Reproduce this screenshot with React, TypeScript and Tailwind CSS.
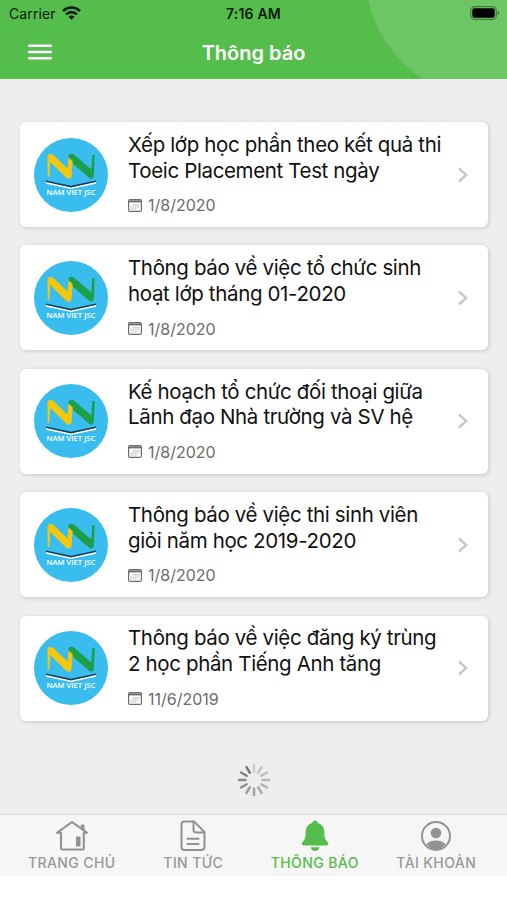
const notices = [
  { lines: ["Xếp lớp học phần theo kết quả thi", "Toeic Placement Test ngày"], date: "1/8/2020" },
  { lines: ["Thông báo về việc tổ chức sinh", "hoạt lớp tháng 01-2020"], date: "1/8/2020" },
  { lines: ["Kế hoạch tổ chức đối thoại giữa", "Lãnh đạo Nhà trường và SV hệ"], date: "1/8/2020" },
  { lines: ["Thông báo về việc thi sinh viên", "giỏi năm học 2019-2020"], date: "1/8/2020" },
  { lines: ["Thông báo về việc đăng ký trùng", "2 học phần Tiếng Anh tăng"], date: "11/6/2019" },
]

const spokes = ["#c9c9c9", "#c4c4c4", "#bebebe", "#b7b7b7", "#b0b0b0", "#a9a9a9", "#a1a1a1", "#999999", "#919191", "#898989", "#808080", "#777777"]

function StatusBar() {
  return (
    <div className="flex h-7 items-center justify-between pl-[9px] pr-[7px] text-[#0b1a08]">
      <div className="-mt-px flex w-[120px] items-center gap-[6px]">
        <span className="text-[14px] tracking-[0.1px]">Carrier</span>
        <svg className="-mt-px" width="19" height="14" viewBox="0 0 19 14" fill="none" stroke="#0b1a08" strokeWidth="2.6">
          <path d="M1 5.2C5.8.2 13.2.2 18 5.2" />
          <path d="M4.1 8.4C7.2 5.4 11.8 5.4 14.9 8.4" />
          <path d="M9.5 13.8L6.5 10.8C8.2 9.2 10.8 9.2 12.5 10.8Z" fill="#0b1a08" stroke="none" />
        </svg>
      </div>
      <span className="-ml-0.5 -mt-0.5 text-[14px] font-semibold tracking-[0.2px]">7:16 AM</span>
      <div className="flex w-[120px] justify-end">
        <svg className="-mt-0.5" width="30" height="14" viewBox="0 0 30 14" fill="none">
          <rect x="0.7" y="0.7" width="25.6" height="12.6" rx="3.8" stroke="#3f7d37" strokeWidth="1.2" />
          <rect x="2.3" y="2.3" width="22.4" height="9.4" rx="2" fill="#000" />
          <path d="M27.6 4.8C29.8 5.8 29.8 8.2 27.6 9.2Z" fill="#3f7d37" />
        </svg>
      </div>
    </div>
  )
}

function Logo() {
  return (
    <svg className="shrink-0" width="74" height="74" viewBox="0 0 74 74">
      <circle cx="37" cy="37" r="37" fill="#38bdee" />
      <path d="M34.5 17Q37.500 14.500 40.500 17L57.300 31.500L58.300 17H60.700L59.800 38.500Q59 41.500 55.500 40L34.500 22Z" fill="#1d9f49" />
      <path d="M13.500 18Q15 14.300 19.500 17L33.500 30.500L34.500 19.500L38.700 23L37.500 38.500Q36.500 42 32.500 40L16.300 24L15.300 39H13.700Z" fill="#f2c80f" />
      <path d="M12 43.600L37 49L62 43.600V45.700L37 51L12 45.700Z" fill="#fff" />
      <path d="M12 42.600L37 47.800L62 42.600V44L37 49.500L12 44Z" fill="#153f5b" />
      <text x="12.5" y="57.2" textLength="49" lengthAdjust="spacingAndGlyphs" fill="#fff" fontSize="7.9" fontWeight="600" fontFamily="Open Sans, sans-serif">
        NAM VIET JSC
      </text>
    </svg>
  )
}

function CalendarIcon() {
  return (
    <svg width="14" height="13" viewBox="0 0 14 13" fill="none">
      <rect x="0.6" y="0.6" width="12.8" height="11.8" rx="1.5" stroke="#6c6c6c" strokeWidth="1.2" />
      <path d="M1 2.4H13" stroke="#6c6c6c" strokeWidth="2" />
      <path d="M5 5.8H12M2.5 8H11.5M2.5 10H9.5" stroke="#b0b0b0" strokeWidth="1.2" strokeDasharray="1.5 .7" />
    </svg>
  )
}

function NoticeCard({ lines, date }: { lines: string[]; date: string }) {
  return (
    <article className="flex h-[105px] items-center rounded-[6px] bg-white pl-[13.5px] pr-[19px] shadow-[1px_1px_4px_rgba(0,0,0,0.16)]">
      <Logo />
      <div className="-mt-[2px] ml-[20.5px] flex-1 whitespace-nowrap">
        <h2 className="text-[20.5px] leading-[25.7px] tracking-[-0.36px] text-[#111]">
          {lines.map((line) => (
            <span key={line} className="block">{line}</span>
          ))}
        </h2>
        <div className="mt-3 flex h-5 items-center gap-[6px] text-[16px] text-[#6c6c6c]">
          <CalendarIcon />
          <span>{date}</span>
        </div>
      </div>
      <svg width="12" height="16" viewBox="0 0 12 16" fill="none" stroke="#c7c7cc" strokeWidth="2.4">
        <path d="M2 1.5L9.2 8L2 14.5" />
      </svg>
    </article>
  )
}

function Spinner() {
  return (
    <svg width="34" height="34" viewBox="0 0 34 34" strokeWidth="2.5" strokeLinecap="round">
      {spokes.map((color, i) => (
        <path key={color} d="M17 2V8.5" stroke={color} transform={`rotate(${i * 30} 17 17)`} />
      ))}
    </svg>
  )
}

function HomeIcon() {
  return (
    <svg width="32" height="32" viewBox="0 0 32 32" fill="none" stroke="#929292" strokeWidth="2.1" strokeLinecap="round" strokeLinejoin="round">
      <path d="M1.2 12.6L16 2L30.8 12.6" />
      <path d="M1.5 12.8H5V28.2Q5 29.5 6.3 29.5H26.5Q27.8 29.5 27.8 28.2V12.8H30.5" />
      <path d="M25.5 5H28V10.5L25.5 8.5Z" fill="#929292" strokeWidth="1" />
      <path d="M20 16.5H24.5V26.5H20Z" fill="#929292" stroke="none" />
    </svg>
  )
}

function NewsIcon() {
  return (
    <svg width="32" height="32" viewBox="0 0 32 32" fill="none" stroke="#929292" strokeWidth="2" strokeLinecap="round" strokeLinejoin="round">
      <path d="M7.5 1.5H17L27.5 12V27Q27.5 30 24 30H8Q4.5 30 4.5 27V4.500Q4.5 1.5 7.5 1.5Z" />
      <path d="M16.5 1.500V9.500Q16.5 12.500 19.5 12.500H27.5M10.500 18.700H21.500M10.500 24H21.500" />
    </svg>
  )
}

function BellIcon() {
  return (
    <svg width="32" height="32" viewBox="0 0 32 32" fill="#55bd4b">
      <path d="M16 .5C14.4.5 13.5 1.5 13.3 2.9C9 4.1 6.700 7.500 6.700 12C6.700 17.500 5.800 19.500 3.500 22.100C2 23.700 2.500 25.500 4.500 25.500H27.500C29.500 25.500 30 23.700 28.500 22.100C26.200 19.500 25.300 17.500 25.300 12C25.300 7.500 23 4.100 18.700 2.900C18.500 1.500 17.600.5 16 .5Z" />
      <path d="M11.8 27.3H20.2C20 29.5 18.3 31 16 31C13.7 31 12 29.5 11.8 27.3Z" />
    </svg>
  )
}

function AccountIcon() {
  return (
    <svg width="32" height="32" viewBox="0 0 32 32">
      <circle cx="16" cy="16" r="14" fill="none" stroke="#929292" strokeWidth="2" />
      <circle cx="16" cy="13" r="5.3" fill="#929292" />
      <path d="M6.5 24.3C8.5 21.5 12.5 20.5 16 20.5C19.5 20.5 23.5 21.5 25.5 24.3C23 27.8 19.5 29.5 16 29.5C12.5 29.5 9 27.8 6.5 24.3Z" fill="#929292" />
    </svg>
  )
}

const tabs = [
  { label: "TRANG CHỦ", icon: <HomeIcon /> },
  { label: "TIN TỨC", icon: <NewsIcon /> },
  { label: "THÔNG BÁO", icon: <BellIcon />, active: true },
  { label: "TÀI KHOẢN", icon: <AccountIcon /> },
]

export default function App() {
  return (
    <div className="flex h-[900px] w-[507px] flex-col overflow-hidden bg-white font-['Inter','Liberation_Sans',sans-serif]">
      {/* Header */}
      <header className="relative h-[79px] shrink-0 overflow-hidden bg-[#55bd4b]">
        <div className="absolute -top-[159px] left-[365px] size-[260px] rounded-full bg-[#6cc663]" />
        <div className="relative">
          <StatusBar />
          <div className="flex h-[48px] items-center px-[27px]">
            <button className="w-[26px]" aria-label="Menu">
              <svg width="26" height="16" viewBox="0 0 26 16" stroke="#fff" strokeWidth="2.6" strokeLinecap="round">
                <path d="M2.2 1.7H23.8M2.2 8H23.8M2.2 14.3H23.8" />
              </svg>
            </button>
            <h1 className="flex-1 pt-px text-center text-[20px] font-semibold text-white">Thông báo</h1>
            <span className="w-[26px]" />
          </div>
        </div>
      </header>

      {/* Notices */}
      <main className="flex h-[735px] shrink-0 flex-col bg-[#eeeeee] pl-5 pr-[19px] pt-[43px]">
        <div className="flex flex-col gap-[18.4px]">
          {notices.map((notice) => (
            <NoticeCard key={notice.lines[0]} {...notice} />
          ))}
        </div>
        <div className="mt-[42px] flex justify-center">
          <Spinner />
        </div>
      </main>

      {/* Tab bar */}
      <nav className="grid h-[62px] shrink-0 grid-cols-4 border-t border-[#dcdcdc] bg-[#f6f6f6] pl-[11px] pr-[10px]">
        {tabs.map((tab) => (
          <a key={tab.label} className={`flex flex-col items-center pt-[5px] text-[14px] font-medium tracking-[0.4px] ${tab.active ? "text-[#55bd4b]" : "text-[#999999]"}`}>
            {tab.icon}
            <span className="mt-px whitespace-nowrap leading-[20px]">{tab.label}</span>
          </a>
        ))}
      </nav>
    </div>
  )
}
